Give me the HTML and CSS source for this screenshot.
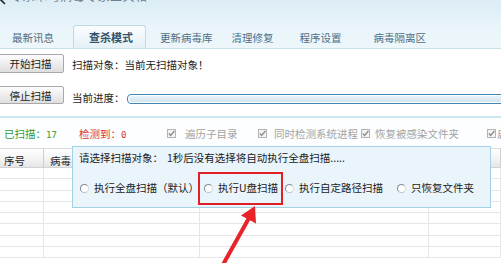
FILE: index.html
```html
<!DOCTYPE html>
<html lang="zh">
<head>
<meta charset="utf-8">
<link rel="stylesheet" href="styles.css">
</head>
<body>
<div class="app">
  <div class="header">
    <div class="title">
      <svg class="logo" width="6" height="6" viewBox="0 0 6 6"><path d="M0 0 L5 5" stroke="#222" stroke-width="1.6"/></svg>
      <span class="title-text">专杀木马病毒专家工具箱</span>
    </div>
    <div class="tabs">
      <div class="tab">最新讯息</div>
      <div class="tab active">查杀模式</div>
      <div class="tab">更新病毒库</div>
      <div class="tab">清理修复</div>
      <div class="tab">程序设置</div>
      <div class="tab">病毒隔离区</div>
    </div>
  </div>

  <div class="main">
    <div class="row row-start">
      <button class="btn">开始扫描</button>
      <span class="row-text">扫描对象：当前无扫描对象！</span>
    </div>
    <div class="row row-stop">
      <button class="btn">停止扫描</button>
      <span class="row-text">当前进度：</span>
      <div class="progress"><div class="progress-inner"></div></div>
    </div>

    <div class="stats">
      <span class="stat scanned">已扫描：<span class="num">17</span></span>
      <span class="stat found">检测到：<span class="num">0</span></span>
      <label class="check c1"><span class="cb"><svg width="9" height="9" viewBox="0 0 9 9"><path d="M1.8 4.4 L3.6 6.4 L7.4 2" fill="none" stroke="#8c8c8c" stroke-width="1.4"/></svg></span>遍历子目录</label>
      <label class="check c2"><span class="cb"><svg width="9" height="9" viewBox="0 0 9 9"><path d="M1.8 4.4 L3.6 6.4 L7.4 2" fill="none" stroke="#8c8c8c" stroke-width="1.4"/></svg></span>同时检测系统进程</label>
      <label class="check c3"><span class="cb"><svg width="9" height="9" viewBox="0 0 9 9"><path d="M1.8 4.4 L3.6 6.4 L7.4 2" fill="none" stroke="#8c8c8c" stroke-width="1.4"/></svg></span>恢复被感染文件夹</label>
      <label class="check c4"><span class="cb"><svg width="9" height="9" viewBox="0 0 9 9"><path d="M1.8 4.4 L3.6 6.4 L7.4 2" fill="none" stroke="#8c8c8c" stroke-width="1.4"/></svg></span>启</label>
    </div>

    <div class="table">
      <div class="thead">
        <div class="th th-no">序号</div>
        <div class="th th-name"><span class="clip">病毒名称</span></div>
        <div class="th"></div>
        <div class="th"></div>
      </div>
      <div class="tbody">
        <div class="tr"><div class="td"></div><div class="td"></div><div class="td"></div><div class="td"></div></div>
        <div class="tr"><div class="td"></div><div class="td"></div><div class="td"></div><div class="td"></div></div>
        <div class="tr"><div class="td"></div><div class="td"></div><div class="td"></div><div class="td"></div></div>
        <div class="tr"><div class="td"></div><div class="td"></div><div class="td"></div><div class="td"></div></div>
        <div class="tr"><div class="td"></div><div class="td"></div><div class="td"></div><div class="td"></div></div>
        <div class="tr"><div class="td"></div><div class="td"></div><div class="td"></div><div class="td"></div></div>
        <div class="tr"><div class="td"></div><div class="td"></div><div class="td"></div><div class="td"></div></div>
        <div class="tr"><div class="td"></div><div class="td"></div><div class="td"></div><div class="td"></div></div>
      </div>
    </div>
  </div>

  <div class="popup">
    <div class="popup-line">请选择扫描对象：<span class="countdown">1秒后没有选择将自动执行全盘扫描.....</span></div>
    <div class="radios">
      <label class="opt o1"><span class="radio"></span>执行全盘扫描（默认）</label>
      <label class="opt o2"><span class="radio"></span>执行U盘扫描</label>
      <label class="opt o3"><span class="radio"></span>执行自定路径扫描</label>
      <label class="opt o4"><span class="radio"></span>只恢复文件夹</label>
    </div>
  </div>

  <div class="highlight"></div>
  <svg class="arrow" width="501" height="263" viewBox="0 0 501 263">
    <line x1="220" y1="270" x2="249" y2="218" stroke="#e8232a" stroke-width="4"/>
    <polygon points="255,206 241,215.5 256,223.5" fill="#e8232a"/>
  </svg>
</div>
</body>
</html>
```

FILE: styles.css
```css
* { box-sizing: border-box; }
html, body { margin: 0; padding: 0; }
body {
  width: 501px;
  height: 263px;
  overflow: hidden;
  background: #fff;
  font-family: "Noto Sans CJK SC", "Liberation Sans", sans-serif;
  font-size: 10.5px;
  color: #1e1e1e;
}
.app { position: relative; width: 501px; height: 263px; overflow: hidden; }

/* header */
.header {
  height: 49px;
  background: linear-gradient(#dcedf5, #e9f5fa 60%, #edf7fb);
  border-bottom: 1px solid #c8e0ea;
}
.title {
  height: 5px;
  overflow: hidden;
  display: flex;
  align-items: flex-start;
}
.logo { flex: none; margin-top: -1px; }
.title-text {
  display: block;
  margin-left: 4px;
  font-size: 12px;
  line-height: 12px;
  margin-top: -10px;
  color: #6f8190;
  letter-spacing: 0.5px;
}
.tabs {
  display: flex;
  margin-top: 20px;
  height: 23px;
}
.tab {
  flex: none;
  height: 23px;
  line-height: 23px;
  color: #4d6e88;
  padding-top: 1px;
}
.tab:nth-child(1) { margin-left: 12px; }
.tab:nth-child(2) { margin-left: 19px; }
.tab:nth-child(3) { margin-left: 14px; }
.tab:nth-child(4) { margin-left: 19px; }
.tab:nth-child(5) { margin-left: 26px; }
.tab:nth-child(6) { margin-left: 32px; }
.tab.active {
  padding: 1px 12px 0 15px;
  font-size: 11px;
  font-weight: bold;
  color: #34536b;
  background: linear-gradient(#fbfdfe, #e4f1f7);
  border: 1px solid #bcdbe7;
  border-bottom: none;
  border-radius: 3px 3px 0 0;
  line-height: 21px;
}

/* main */
.row { display: flex; align-items: center; }
.row-start { margin-top: 5px; height: 19px; }
.row-stop { margin-top: 13px; height: 18px; }
.btn {
  flex: none;
  width: 67px;
  height: 100%;
  margin-left: -3px;
  padding: 0;
  font: inherit;
  font-size: 10.5px;
  color: #222;
  background: linear-gradient(#fdfdfd, #ececec 55%, #dedede);
  border: 1px solid #a9a9a9;
  border-radius: 2px;
}
.row-text { flex: none; margin-left: 8px; padding-top: 2px; line-height: 14px; white-space: nowrap; }
.row-stop .row-text { padding-top: 5px; }
.progress {
  flex: none;
  width: 400px;
  height: 10px;
  margin-left: 2px;
  margin-top: 8px;
  border: 1px solid #3f86b3;
  border-radius: 4px 0 0 4px;
  background: #fff;
  padding: 1px;
}
.progress-inner {
  height: 100%;
  border-radius: 3px 0 0 3px;
  background: linear-gradient(#e9f3f9, #cfe4f1);
}

.stats {
  margin-top: 12px;
  height: 32px;
  border-top: 2px solid #c9e8f2;
  background: #fcfeff;
  display: flex;
  align-items: center;
  padding-left: 4px;
  padding-top: 1px;
  white-space: nowrap;
}
.stat { flex: none; }
.num { font-family: "DejaVu Sans Mono", monospace; font-size: 9px; }
.scanned { width: 75px; color: #2f9a36; }
.found { width: 88px; color: #d83434; }
.check {
  flex: none;
  display: flex;
  align-items: center;
  color: #a3a3a3;
}
.cb {
  width: 9px; height: 9px;
  border: 1px solid #b4b4b4;
  background: #f4f4f4;
  display: flex;
  margin-right: 7px;
}
.cb svg { display: block; margin: -1px; }
.c1 { width: 91px; }
.c1 .cb { margin-right: 9px; }
.c2 { width: 103px; }
.c3 { width: 126px; }
.c3 .cb { margin-right: 5px; }
.c4 .cb { margin-right: 1px; }

/* table */
.table { border-top: 1px solid #dcdcdc; }
.thead {
  display: grid;
  grid-template-columns: 44px 156px 229px 1fr;
  height: 19px;
  background: linear-gradient(#ffffff, #f2f2f2 60%, #e6e6e6);
  border-bottom: 1px solid #d2d2d2;
}
.th {
  line-height: 19px;
  padding-left: 4px;
  padding-top: 2px;
  border-right: 1px solid #cfcfcf;
  color: #222;
  white-space: nowrap;
  overflow: hidden;
}
.th-name { padding-left: 6px; }
.clip { display: inline-block; width: 21px; overflow: hidden; vertical-align: top; }
.tr {
  display: grid;
  grid-template-columns: 44px 156px 229px 1fr;
  height: 11.3px;
  border-bottom: 1px solid #e6e6e6;
}
.td { border-right: 1px solid #e6e6e6; }

/* popup overlay */
.popup {
  position: absolute;
  left: 72px;
  top: 146px;
  width: 419px;
  height: 62px;
  background: #eaf4fb;
  border: 1px solid #a3d2e5;
  padding: 4px 0 0 6px;
}
.popup-line { height: 14px; line-height: 14px; white-space: nowrap; color: #1a1a1a; }
.countdown { margin-left: 4px; }
.radios {
  margin-top: 16px;
  display: flex;
  height: 14px;
  line-height: 14px;
  margin-left: 1px;
  white-space: nowrap;
}
.opt { flex: none; display: flex; align-items: center; color: #1a1a1a; }
.o1 { width: 124px; }
.o2 { width: 81px; }
.o3 { width: 112px; }
.radio {
  width: 9px; height: 9px;
  border-radius: 50%;
  border: 1px solid #7f8c95;
  border-right-color: #d2d8dc;
  border-bottom-color: #b8c0c6;
  background: #fff;
  margin-right: 5px;
  flex: none;
}

/* annotation */
.highlight {
  position: absolute;
  left: 198px;
  top: 172px;
  width: 85px;
  height: 33px;
  border: 2px solid #e11f26;
}
.arrow { position: absolute; left: 0; top: 0; pointer-events: none; }
```
